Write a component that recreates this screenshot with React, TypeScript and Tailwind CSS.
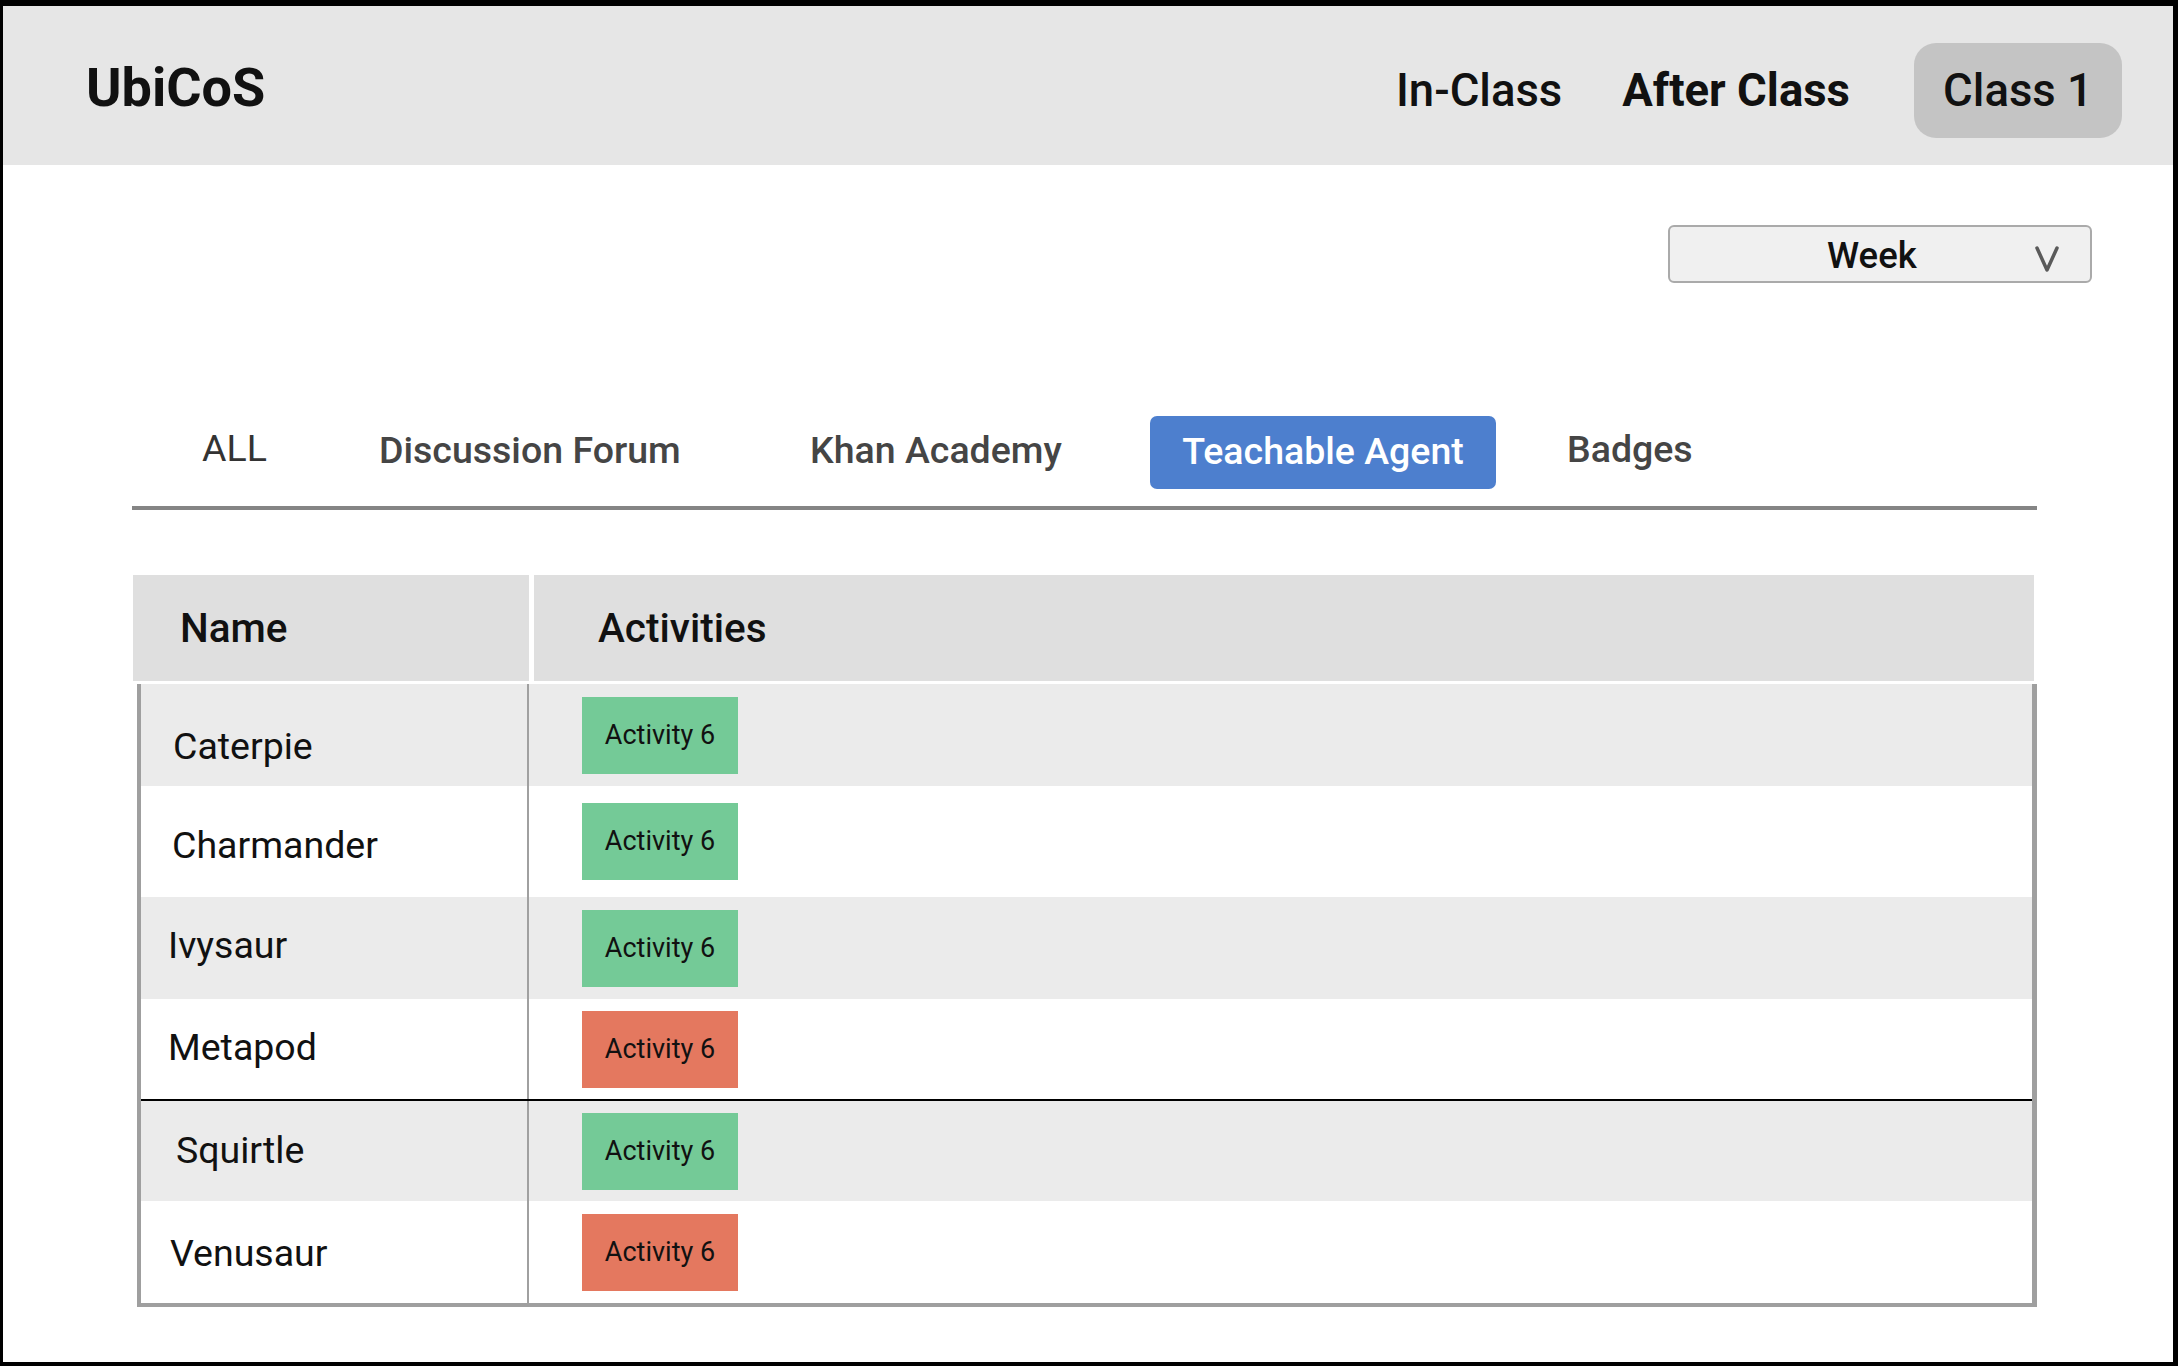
const students = [
    { name: 'Caterpie', status: 'done', h: 'h-[102px]', bg: 'bg-[#ebebeb]', pad: 'pl-[32px] pt-[24px]' },
    { name: 'Charmander', status: 'done', h: 'h-[111px]', bg: 'bg-white', pad: 'pl-[31px] pt-[8px]' },
    { name: 'Ivysaur', status: 'done', h: 'h-[102px]', bg: 'bg-[#ebebeb]', pad: 'pl-[27px] pb-[4px]' },
    { name: 'Metapod', status: 'late', h: 'h-[100px]', bg: 'bg-white', pad: 'pl-[27px] pb-[2px]' },
    { name: 'Squirtle', status: 'done', h: 'h-[102px]', bg: 'bg-[#ebebeb]', pad: 'pl-[35px]' },
    { name: 'Venusaur', status: 'late', h: 'h-[102px]', bg: 'bg-white', pad: 'pl-[29px] pt-[4px]' },
];

const tabs = [
    { label: 'ALL', box: 'ml-[70px] w-[177px] font-normal text-[#333] pb-[8px]' },
    { label: 'Discussion Forum', box: 'w-[431px] pb-[3px]' },
    { label: 'Khan Academy', box: 'w-[340px] pb-[3px]' },
];

export default function App() {
    return (
        <div className="w-[2178px] h-[1366px] box-border border-black border-t-[6px] border-l-[3px] border-r-[5px] border-b-[4px] bg-white font-['Roboto',sans-serif] text-[#111] overflow-hidden">
            {/* top bar */}
            <header className="h-[159px] bg-[#e6e6e6] flex items-center pt-[10px] pl-[83px] pr-[51px]">
                <h1 className="text-[54px] leading-none font-bold mb-[6px]">UbiCoS</h1>
                <nav className="ml-auto flex items-center text-[45.5px] leading-none">
                    <a className="font-medium">In-Class</a>
                    <a className="font-bold ml-[60px]">After Class</a>
                    <a className="font-medium ml-[64px] w-[208px] h-[95px] rounded-[22px] bg-[#c4c4c4] flex items-center justify-center">
                        Class 1
                    </a>
                </nav>
            </header>

            {/* period picker */}
            <div className="flex justify-end pt-[60px] pr-[81px]">
                <button className="w-[424px] h-[58px] box-border border-2 border-[#aaaaaa] rounded-[6px] bg-[#f0f0f0] flex items-center pl-[157px] pt-[4px]">
                    <span className="text-[36.5px] leading-none font-medium">Week</span>
                    <svg className="ml-[116px] mt-[6px]" width="28" height="28" viewBox="0 0 28 28" fill="none">
                        <path d="M4 3 L14 25 L24 3" stroke="#5a5a5a" strokeWidth="3.5" strokeLinecap="round" strokeLinejoin="round" />
                    </svg>
                </button>
            </div>

            {/* source tabs */}
            <div className="ml-[129px] w-[1905px] mt-[133px]">
                <div className="flex items-center h-[73px] text-[37.5px] leading-none font-medium text-[#454545]">
                    {tabs.map((t) => (
                        <span key={t.label} className={t.box}>{t.label}</span>
                    ))}
                    <span className="w-[346px] h-[73px] rounded-[7px] bg-[#4d7fce] text-white flex items-center justify-center pb-[2px]">
                        Teachable Agent
                    </span>
                    <span className="ml-[71px] pb-[6px]">Badges</span>
                </div>
                <div className="mt-[17px] border-t-4 border-[#858585]" />
            </div>

            {/* activity table */}
            <div className="ml-[130px] w-[1901px] mt-[65px]">
                <div className="flex h-[106px] text-[40.5px] leading-none font-medium">
                    <div className="w-[396px] bg-[#dfdfdf] flex items-center pl-[47px]">Name</div>
                    <div className="ml-[5px] flex-1 bg-[#dfdfdf] flex items-center pl-[64px]">Activities</div>
                </div>
                <div className="mt-[3px] ml-[4px] w-[1900px] box-border border-l-4 border-r-[5px] border-b-4 border-[#9f9f9f]">
                    {students.map((s, i) => (
                        <div key={s.name} className={`flex ${s.h} ${s.bg} ${i === 4 ? 'border-t-2 border-black' : ''}`}>
                            <div className={`w-[386px] flex items-center text-[37.5px] leading-none ${s.pad}`}>{s.name}</div>
                            <div className="w-[2px] bg-[#a0a0a0]" />
                            <div className="flex items-center pl-[53px]">
                                <span className={`w-[156px] h-[77px] flex items-center justify-center text-[27px] leading-none ${s.status === 'done' ? 'bg-[#74ca97]' : 'bg-[#e4785f]'}`}>
                                    Activity 6
                                </span>
                            </div>
                        </div>
                    ))}
                </div>
            </div>
        </div>
    );
}
